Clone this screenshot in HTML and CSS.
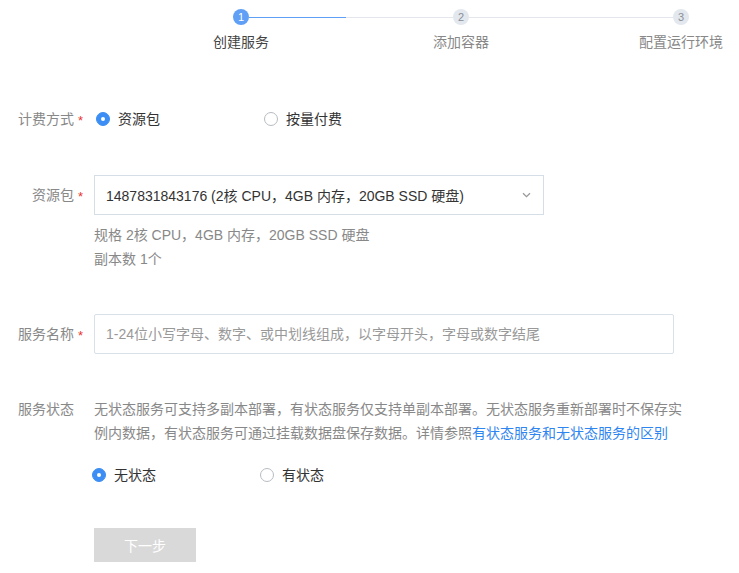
FILE: index.html
```html
<!DOCTYPE html>
<html lang="zh-CN">
<head>
<meta charset="utf-8">
<title>创建服务</title>
<link rel="stylesheet" href="styles.css">
</head>
<body>
<div class="steps">
  <div class="track">
    <span class="dot active">1</span>
    <span class="line"><span class="line-fill"></span></span>
    <span class="dot">2</span>
    <span class="line"></span>
    <span class="dot">3</span>
  </div>
  <div class="step-labels">
    <span class="step-label current">创建服务</span>
    <span class="step-label">添加容器</span>
    <span class="step-label">配置运行环境</span>
  </div>
</div>

<div class="form">
  <div class="row row-billing">
    <div class="label">计费方式<span class="req">*</span></div>
    <div class="options">
      <label class="option first"><span class="radio checked"></span>资源包</label>
      <label class="option"><span class="radio"></span>按量付费</label>
    </div>
  </div>

  <div class="row row-package">
    <div class="label label-box">资源包<span class="req">*</span></div>
    <div class="field">
      <div class="select">
        <span>1487831843176 (2核 CPU，4GB 内存，20GB SSD 硬盘)</span>
        <svg class="chev" width="9" height="6" viewBox="0 0 9 6"><path d="M1 1.2 L4.5 4.6 L8 1.2" fill="none" stroke="#999" stroke-width="1.3"/></svg>
      </div>
      <div class="help">
        <div>规格 2核 CPU，4GB 内存，20GB SSD 硬盘</div>
        <div>副本数 1个</div>
      </div>
    </div>
  </div>

  <div class="row row-name">
    <div class="label label-box">服务名称<span class="req">*</span></div>
    <div class="input">1-24位小写字母、数字、或中划线组成，以字母开头，字母或数字结尾</div>
  </div>

  <div class="row row-status">
    <div class="label label-desc">服务状态<span class="req hidden">*</span></div>
    <div class="field">
      <p class="desc">无状态服务可支持多副本部署，有状态服务仅支持单副本部署。无状态服务重新部署时不保存实例内数据，有状态服务可通过挂载数据盘保存数据。详情参照<a class="link" href="#">有状态服务和无状态服务的区别</a></p>
      <div class="options options-status">
        <label class="option"><span class="radio checked"></span>无状态</label>
        <label class="option"><span class="radio"></span>有状态</label>
      </div>
    </div>
  </div>

  <div class="actions">
    <button class="btn" disabled>下一步</button>
  </div>
</div>
</body>
</html>
```

FILE: styles.css
```css
* { box-sizing: border-box; }
html, body { margin: 0; padding: 0; background: #fff; }
body {
  font-family: "Liberation Sans", "Noto Sans CJK SC", sans-serif;
  font-size: 14px;
  color: #333;
  overflow: hidden;
}

/* steps */
.steps { padding-top: 9px; }
.track {
  display: flex;
  align-items: center;
  margin-left: 233px;
  height: 16px;
}
.dot {
  width: 16px;
  height: 16px;
  border-radius: 50%;
  background: #e3e8ee;
  color: #8a8f96;
  font-size: 11px;
  line-height: 16px;
  text-align: center;
  flex: none;
}
.dot.active { background: #5f9ff5; color: #fff; }
.line {
  width: 204px;
  height: 1px;
  background: #e3e6ea;
  flex: none;
  display: flex;
}
.line-fill { width: 97px; height: 1px; background: #5f9ff5; }
.step-labels {
  display: flex;
  margin-left: 191px;
  gap: 120px;
  margin-top: 7px;
}
.step-label {
  width: 100px;
  text-align: center;
  line-height: 20px;
  color: #888;
  flex: none;
  white-space: nowrap;
}
.step-label.current { color: #444; }

/* form */
.form { margin-top: 57px; }
.row { display: flex; align-items: flex-start; }
.label {
  width: 86px;
  flex: none;
  text-align: right;
  color: #888;
  line-height: 20px;
  margin-right: 8px;
  white-space: nowrap;
}
.req {
  display: inline-block;
  width: 8px;
  margin-left: 4px;
  text-align: left;
  color: #e8352e;
  font-size: 13px;
  line-height: 1;
  vertical-align: middle;
}
.req.hidden { visibility: hidden; }
.label-box { line-height: 40px; }
.label-desc { line-height: 24px; }

.options { display: flex; line-height: 20px; }
.option {
  width: 168px;
  display: flex;
  align-items: center;
  color: #333;
}
.option.first { margin-left: 2px; }
.radio {
  width: 14px;
  height: 14px;
  border-radius: 50%;
  border: 1px solid #b8bcc2;
  margin-right: 8px;
  flex: none;
  display: flex;
  align-items: center;
  justify-content: center;
}
.radio.checked { background: #3d8ef4; border-color: #3d8ef4; }
.radio.checked::after {
  content: "";
  width: 4px;
  height: 4px;
  border-radius: 50%;
  background: #fff;
}

.row-package { margin-top: 46px; }
.select {
  width: 450px;
  height: 40px;
  border: 1px solid #d5dde6;
  display: flex;
  align-items: center;
  justify-content: space-between;
  padding: 0 12px 0 11px;
  color: #333;
}
.help {
  margin-top: 8px;
  color: #888;
  line-height: 24px;
}

.row-name { margin-top: 43px; }
.input {
  width: 580px;
  height: 40px;
  border: 1px solid #d9e0e8;
  border-radius: 2px;
  line-height: 38px;
  padding: 0 11px;
  color: #999;
}

.row-status { margin-top: 43px; }
.desc {
  margin: 0;
  width: 600px;
  line-height: 24px;
  color: #888;
}
.link { color: #2f86f0; text-decoration: none; }
.options-status { margin-top: 20px; margin-left: -2px; }

.actions { margin-top: 43px; padding-left: 94px; }
.btn {
  width: 102px;
  height: 34px;
  border: 0;
  background: #d9d9d9;
  color: #fff;
  font-family: inherit;
  font-size: 14px;
  padding: 0;
}
```
